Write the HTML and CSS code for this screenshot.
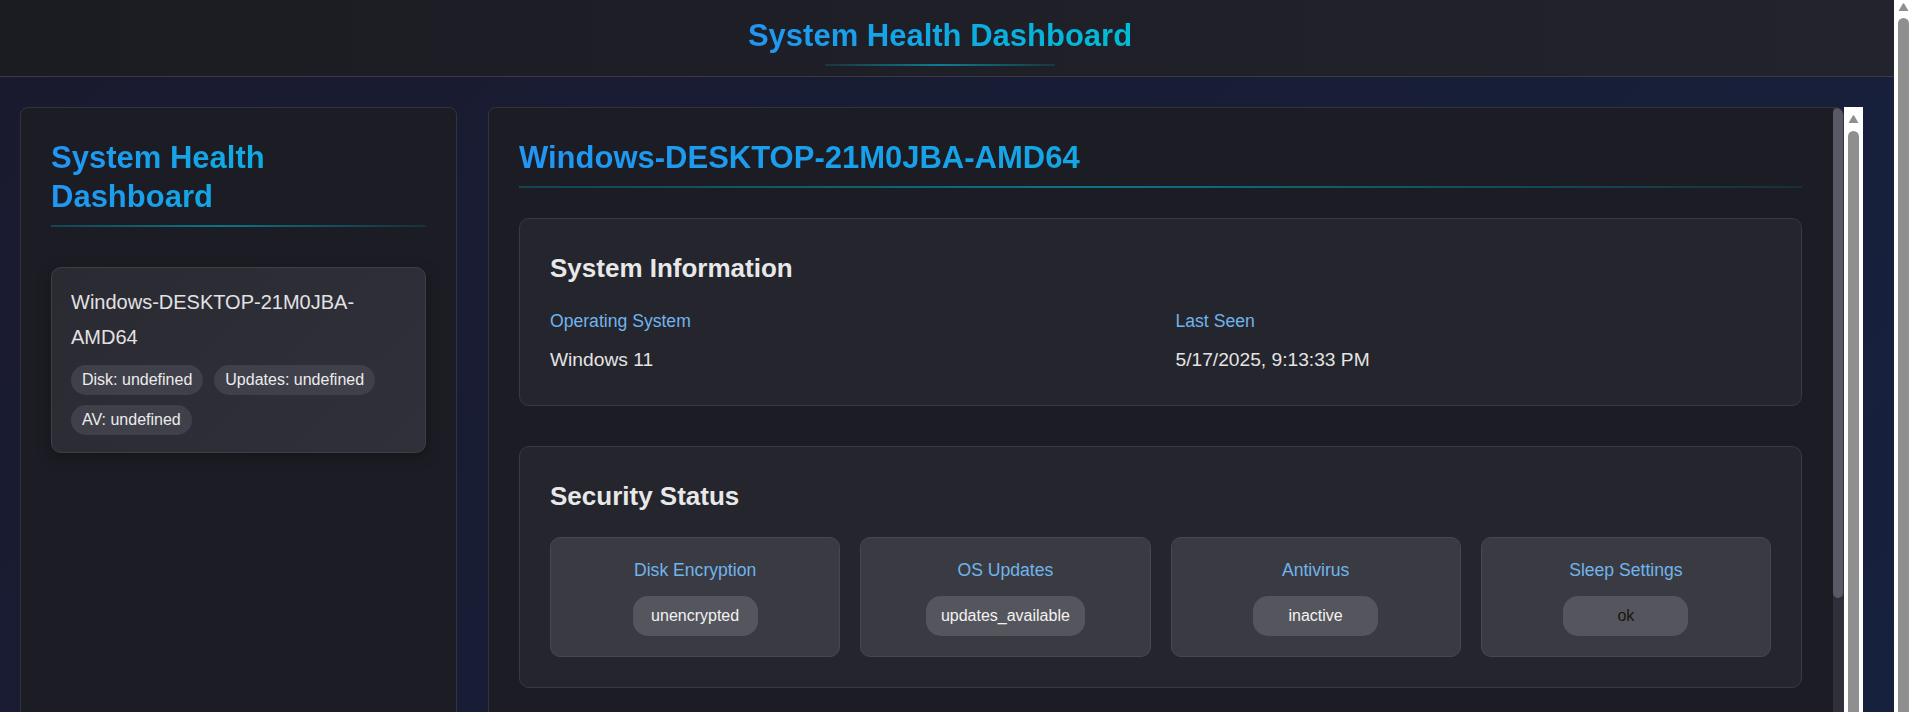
FILE: index.html
```html
<!DOCTYPE html>
<html lang="en">
<head>
<meta charset="utf-8">
<title>System Health Dashboard</title>
<link rel="stylesheet" href="styles.css">
</head>
<body>
<div class="page">
  <header class="app-header">
    <h1 class="app-title">System Health Dashboard</h1>
  </header>
  <div class="layout">
    <aside class="sidebar">
      <h1 class="sidebar-title">System Health Dashboard</h1>
      <div class="device-list">
        <div class="device-item">
          <div class="device-name">Windows-DESKTOP-21M0JBA-AMD64</div>
          <div class="device-tags">
            <span class="tag">Disk: undefined</span>
            <span class="tag">Updates: undefined</span>
            <span class="tag">AV: undefined</span>
          </div>
        </div>
      </div>
    </aside>
    <main class="main-frame">
      <section class="device-panel">
        <div class="panel-body">
          <h2 class="device-title">Windows-DESKTOP-21M0JBA-AMD64</h2>
          <div class="info-section">
            <h3 class="section-title">System Information</h3>
            <div class="info-grid">
              <div class="info-item">
                <div class="info-label">Operating System</div>
                <div class="info-value">Windows 11</div>
              </div>
              <div class="info-item">
                <div class="info-label">Last Seen</div>
                <div class="info-value">5/17/2025, 9:13:33 PM</div>
              </div>
            </div>
          </div>
          <div class="info-section">
            <h3 class="section-title">Security Status</h3>
            <div class="status-grid">
              <div class="status-card">
                <div class="status-label">Disk Encryption</div>
                <span class="status-pill">unencrypted</span>
              </div>
              <div class="status-card">
                <div class="status-label">OS Updates</div>
                <span class="status-pill">updates_available</span>
              </div>
              <div class="status-card">
                <div class="status-label">Antivirus</div>
                <span class="status-pill">inactive</span>
              </div>
              <div class="status-card">
                <div class="status-label">Sleep Settings</div>
                <span class="status-pill status-ok">ok</span>
              </div>
            </div>
          </div>
        </div>
        <div class="panel-track"><div class="panel-thumb"></div></div>
      </section>
      <div class="scrollbar frame-scrollbar">
        <svg class="sb-arrow" width="11" height="8" viewBox="0 0 11 8"><path d="M0.5 8 L4.6 1 Q5.5 -0.3 6.4 1 L10.5 8 Z"/></svg>
        <div class="sb-thumb"></div>
      </div>
    </main>
  </div>
</div>
<div class="scrollbar page-scrollbar">
  <svg class="sb-arrow" width="11" height="8" viewBox="0 0 11 8"><path d="M0.5 8 L4.6 1 Q5.5 -0.3 6.4 1 L10.5 8 Z"/></svg>
  <div class="sb-thumb"></div>
</div>
</body>
</html>
```
FILE: styles.css
```css
* {
  box-sizing: border-box;
}

html,
body {
  margin: 0;
  padding: 0;
  height: 100%;
}

body {
  display: flex;
  overflow: hidden;
  font-family: "Liberation Sans", Arial, sans-serif;
  background: linear-gradient(135deg, #1a1a2e 0%, #16213e 100%);
  color: #e0e0e0;
}

.page {
  flex: 1;
  min-width: 0;
  height: 100%;
  overflow: hidden;
}

/* ---------- drawn scrollbars ---------- */
.scrollbar {
  background: #ffffff;
}

.sb-arrow {
  display: block;
  fill: #8f8f8f;
}

.sb-thumb {
  width: 11px;
  height: 760px;
  background: #8f8f8f;
  border-radius: 6px 6px 0 0;
}

.page-scrollbar {
  flex: 0 0 15px;
  height: 100%;
  padding: 3px 0 0 4px;
}

.page-scrollbar .sb-thumb {
  margin-top: 7px;
}

.frame-scrollbar {
  flex: 0 0 19px;
  padding: 8px 4px 0;
}

.frame-scrollbar .sb-thumb {
  margin-top: 8px;
}

/* ---------- header ---------- */
.app-header {
  background: linear-gradient(90deg, #1b1b22 0%, #23232d 100%);
  border-bottom: 1px solid #3a3a46;
  padding: 16px 14px 10px 0;
  text-align: center;
}

.app-title {
  display: inline-block;
  position: relative;
  margin: 0;
  padding-bottom: 11px;
  font-size: 31px;
  line-height: 39px;
  font-weight: 700;
  background: linear-gradient(90deg, #2196f3, #00bcd4);
  -webkit-background-clip: text;
  background-clip: text;
  color: transparent;
}

.app-title::after {
  content: "";
  position: absolute;
  left: 20%;
  width: 60%;
  bottom: 0;
  height: 2px;
  background: linear-gradient(90deg, rgba(0, 188, 212, 0.15), rgba(0, 188, 212, 0.6), rgba(0, 188, 212, 0.15));
}

/* ---------- layout ---------- */
.layout {
  display: flex;
  align-items: flex-start;
  gap: 31px;
  padding: 30px 31px 0 20px;
}

.sidebar {
  flex: 0 0 437px;
  height: 660px;
  padding: 30px;
  background: #1c1c24;
  border: 1px solid #32333d;
  border-radius: 8px;
}

.sidebar-title {
  position: relative;
  margin: 0 0 40px;
  padding-bottom: 11px;
  font-size: 31px;
  line-height: 39px;
  font-weight: 700;
  background: linear-gradient(90deg, #2196f3, #00bcd4);
  -webkit-background-clip: text;
  background-clip: text;
  color: transparent;
}

.sidebar-title::after,
.device-title::after {
  content: "";
  position: absolute;
  left: 0;
  right: 0;
  bottom: 0;
  height: 2px;
  background: linear-gradient(90deg, rgba(0, 188, 212, 0.25), rgba(0, 188, 212, 0.55) 45%, rgba(0, 188, 212, 0.12));
}

.device-item {
  padding: 17px 19px;
  background: linear-gradient(135deg, #2a2a33 0%, #30303a 100%);
  border: 1px solid #3d3e48;
  border-radius: 10px;
  box-shadow: 0 4px 15px rgba(0, 0, 0, 0.3);
}

.device-name {
  font-size: 20px;
  line-height: 35px;
  color: #e2e2e2;
}

.device-tags {
  display: flex;
  flex-wrap: wrap;
  gap: 10px 11px;
  margin-top: 10px;
}

.tag {
  padding: 6px 11px;
  font-size: 16px;
  line-height: 18px;
  color: #ececec;
  background: #3f404a;
  border-radius: 15px;
}

/* ---------- main ---------- */
.main-frame {
  flex: 1;
  min-width: 0;
  display: flex;
  height: 660px;
}

.device-panel {
  flex: 1;
  min-width: 0;
  display: flex;
  overflow: hidden;
  background: #1c1c24;
  border: 1px solid #32333d;
  border-radius: 8px;
}

.panel-body {
  flex: 1;
  min-width: 0;
  padding: 30px 31px 30px 30px;
}

.panel-track {
  flex: 0 0 10px;
  background: #2f2f39;
}

.panel-thumb {
  height: 490px;
  background: #5a5a66;
  border-radius: 5px;
}

.device-title {
  position: relative;
  margin: 0 0 30px;
  padding-bottom: 11px;
  font-size: 31px;
  line-height: 39px;
  font-weight: 700;
  background: linear-gradient(90deg, #2196f3, #00bcd4);
  -webkit-background-clip: text;
  background-clip: text;
  color: transparent;
}

.info-section {
  margin-bottom: 40px;
  padding: 30px;
  background: #25252e;
  border: 1px solid #383944;
  border-radius: 10px;
}

.info-section:last-child {
  margin-bottom: 0;
}

.section-title {
  margin: 0 0 22px;
  font-size: 26px;
  line-height: 38px;
  font-weight: 700;
  color: #e8e8e8;
}

.info-grid {
  display: grid;
  grid-template-columns: 1fr 1fr;
  gap: 30px;
}

.info-label {
  font-size: 17.6px;
  line-height: 24px;
  margin-bottom: 12px;
  color: #70b4ec;
}

.info-value {
  font-size: 19.2px;
  line-height: 30px;
  color: #e4e4e4;
}

.status-grid {
  display: grid;
  grid-template-columns: repeat(4, 1fr);
  gap: 20px;
}

.status-card {
  padding: 20px;
  text-align: center;
  background: #3a3b42;
  border: 1px solid #47484f;
  border-radius: 10px;
}

.status-label {
  font-size: 17.6px;
  line-height: 24px;
  margin-bottom: 14px;
  color: #70b4ec;
}

.status-pill {
  display: inline-block;
  min-width: 125px;
  padding: 7px 15px;
  font-size: 16px;
  line-height: 26px;
  color: #f2f2f2;
  background: #55565d;
  border-radius: 15px;
}

.status-pill.status-ok {
  color: #151515;
}
```
